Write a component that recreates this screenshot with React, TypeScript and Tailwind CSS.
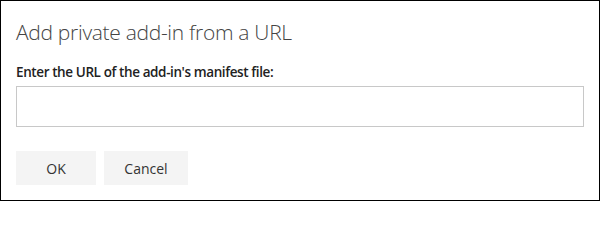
export default function App() {
  return (
    <div className="w-[600px] h-[201px] border border-black bg-white font-['Open_Sans',sans-serif]">
      <div className="px-[15px] pt-[17px]">
        <h1 className="text-[21px] leading-[28px] font-light text-[#444444] tracking-[-0.3px]">
          Add private add-in from a URL
        </h1>
        <label className="mt-[16px] block text-[13.5px] leading-[20px] font-semibold text-[#222222] tracking-[-0.4px]">
          Enter the URL of the add-in's manifest file:
        </label>
        <input
          type="text"
          className="mt-[4px] block h-[41px] w-[568px] border border-[#c8c8c8] bg-white px-2 text-[14px] outline-none"
        />
        <div className="mt-[24px] flex gap-2">
          <button className="h-[34px] w-[80px] bg-[#f4f4f4] text-[14px] text-[#333333]">OK</button>
          <button className="h-[34px] w-[84px] bg-[#f4f4f4] text-[14px] text-[#333333]">Cancel</button>
        </div>
      </div>
    </div>
  );
}
